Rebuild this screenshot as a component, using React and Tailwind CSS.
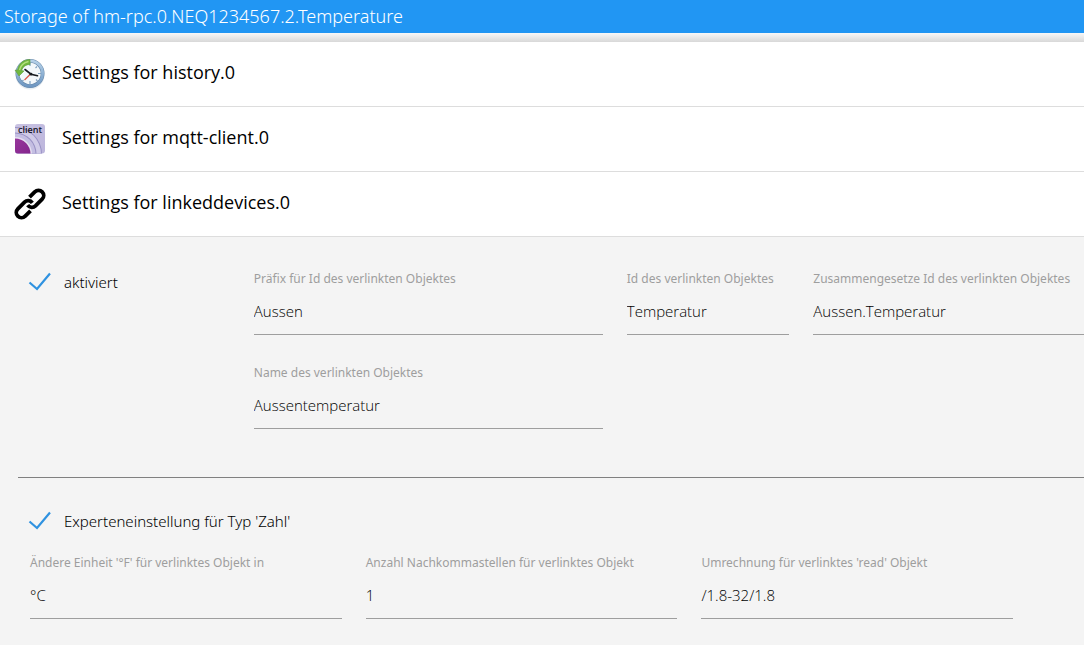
import { useState } from 'react';

// --- ICONS ---
function HistoryIcon() {
  return (
    <svg viewBox="0 0 32 32" className="w-8 h-8 shrink-0" aria-hidden="true">
      <defs>
        <linearGradient id="ring" x1="0" y1="0" x2="0" y2="1">
          <stop offset="0" stopColor="#b4d0e8" />
          <stop offset="1" stopColor="#6e97c2" />
        </linearGradient>
      </defs>
      <circle cx="16" cy="17" r="14.5" fill="#d9e2ea" opacity="0.6" />
      <circle cx="16" cy="15.5" r="12.6" fill="#f3f8fb" stroke="#6485a8" strokeWidth="3.8" />
      <circle cx="16" cy="15.5" r="12.6" fill="none" stroke="url(#ring)" strokeWidth="2.8" />
      <path d="M16 5v3M16 23v3M24 15.5h3M23 8.500l-1.500 1.500M9.500 22l-1.500 1.500M23.500 23l-1.500-1.500" stroke="#7fa3c4" strokeWidth="1.200" />
      <path d="M16 1.500v5C12 6.500 9 8.500 7.500 12.500l2.500.500-5 5-4-6 2.500.300C4.500 5.500 9.500 1.500 16 1.500z" fill="#72b83e" stroke="#5c9a3c" strokeWidth="0.600" />
      <path d="M14.500 3.500C10 4.500 6.500 7.500 5.500 12" fill="none" stroke="#b4e07f" strokeWidth="1.400" />
      <path d="M16.500 16l-6 6" stroke="#dd5548" strokeWidth="1.200" />
      <path d="M11 11.500l6 4.700 6.500 1.500" fill="none" stroke="#171b20" strokeWidth="1.600" strokeLinecap="round" />
      <circle cx="17" cy="16.200" r="1.400" fill="#171b20" />
    </svg>
  );
}

function MqttIcon() {
  return (
    <svg viewBox="0 0 32 32" className="w-8 h-8 shrink-0" aria-hidden="true">
      <defs>
        <clipPath id="tile">
          <rect x="1" y="1" width="30" height="29.5" rx="3" />
        </clipPath>
        <linearGradient id="lilac" x1="0" y1="0" x2="1" y2="1">
          <stop offset="0" stopColor="#c9c3e2" />
          <stop offset="1" stopColor="#bcb5dc" />
        </linearGradient>
        <linearGradient id="core" x1="0" y1="0" x2="1" y2="1">
          <stop offset="0" stopColor="#a03fa2" />
          <stop offset="1" stopColor="#7b1c86" />
        </linearGradient>
      </defs>
      <g clipPath="url(#tile)">
        <rect width="32" height="32" fill="url(#lilac)" />
        <circle cx="1" cy="31" r="27" fill="#9890c4" />
        <circle cx="1" cy="31" r="26" fill="#d0cbe8" />
        <circle cx="1" cy="31" r="21.5" fill="#9890c4" />
        <circle cx="1" cy="31" r="20.5" fill="#c4bee2" />
        <circle cx="1" cy="31" r="17" fill="#e4dff0" />
        <circle cx="1" cy="31" r="15.5" fill="url(#core)" />
      </g>
      <text x="16" y="10" textAnchor="middle" fontSize="9" fontWeight="600" fontFamily="Open Sans, sans-serif" fill="#17141f">client</text>
    </svg>
  );
}

function LinkIcon() {
  return (
    <svg viewBox="0 0 32 32" className="w-8 h-8 shrink-0" fill="none" stroke="#000" strokeWidth="3.8" aria-hidden="true">
      <g transform="rotate(-45 16 16)">
        <path d="M20.500 10.800H28a5.200 5.200 0 0 1 0 10.400H18.500a5.200 5.200 0 0 1-5-6" />
        <path d="M11.500 21.200H4a5.200 5.200 0 0 1 0-10.400H13.500a5.200 5.200 0 0 1 5 6" />
      </g>
    </svg>
  );
}

// --- FORM PARTS ---
function Check({ id, label, checked, onChange }) {
  return (
    <label htmlFor={id} className="flex items-center h-5 cursor-pointer font-['Noto_Sans',sans-serif] text-[15px] font-light text-black">
      <input id={id} type="checkbox" checked={checked} onChange={onChange} className="peer sr-only" />
      <svg viewBox="0 0 24 20" className="w-6 h-5 mr-3 shrink-0 invisible peer-checked:visible" fill="none" stroke="#2f92e0" strokeWidth="2.2" aria-hidden="true">
        <path d="M1.500 10.500l7.500 6.500L22 1.500" />
      </svg>
      <span className="whitespace-nowrap">{label}</span>
    </label>
  );
}

function Field({ id, label, value, onChange, className }) {
  return (
    <div className={className}>
      <label htmlFor={id} className="block h-4 leading-4 font-['Noto_Sans',sans-serif] text-xs text-[#9e9e9e] whitespace-nowrap">{label}</label>
      <input id={id} type="text" value={value} onChange={(e) => onChange(id, e.target.value)}
        className="block w-full h-12 bg-transparent border-b border-[#9e9e9e] text-[15px] font-light text-black outline-none focus:border-[#2196f3]" />
    </div>
  );
}

function AdapterRow({ icon, title, onClick }) {
  return (
    <button type="button" onClick={onClick} className="flex items-center w-full h-[65px] pl-3.5 bg-white border-b border-[#dddddd] text-left">
      {icon}
      <span className="ml-4 pb-1 text-lg text-black whitespace-nowrap">{title}</span>
    </button>
  );
}

export default function App() {
  const [open, setOpen] = useState(true);
  const [enabled, setEnabled] = useState(true);
  const [expert, setExpert] = useState(true);
  const [values, setValues] = useState({
    prefix: "Aussen",
    stateId: "Temperatur",
    name: "Aussentemperatur",
    unit: "°C",
    decimals: "1",
    conversion: "/1.8-32/1.8",
  });

  const update = (id, value) => setValues((prev) => ({ ...prev, [id]: value }));

  return (
    <div className="min-h-screen overflow-hidden bg-[#f4f4f4] font-['Open_Sans','Noto_Sans',sans-serif]">
      {/* HEADER */}
      <header className="h-[33px] px-1 bg-[#2196f3]">
        <h1 className="font-['Noto_Sans',sans-serif] text-lg leading-8 font-light text-white whitespace-nowrap">Storage of hm-rpc.0.NEQ1234567.2.Temperature</h1>
      </header>
      <div className="h-[9px] bg-linear-to-b from-[#f8f8f8] to-[#d8d8d8]"></div>

      {/* ADAPTERS */}
      <AdapterRow icon={<HistoryIcon />} title="Settings for history.0" />
      <AdapterRow icon={<MqttIcon />} title="Settings for mqtt-client.0" />
      <AdapterRow icon={<LinkIcon />} title="Settings for linkeddevices.0" onClick={() => setOpen(!open)} />

      {/* LINKED DEVICES: the form runs past the right edge */}
      {open && (
        <form className="w-[calc(100%+35px)] ml-[18px] pt-[34px]" onSubmit={(e) => e.preventDefault()}>
          <div className="grid grid-cols-[6fr_10fr_5fr_9fr] gap-y-[30px]">
            <div className="pl-2.5 pt-px">
              <Check id="enabled" label="aktiviert" checked={enabled} onChange={() => setEnabled(!enabled)} />
            </div>
            <Field id="prefix" label="Präfix für Id des verlinkten Objektes" value={values.prefix} onChange={update} className="min-w-0 px-3" />
            <Field id="stateId" label="Id des verlinkten Objektes" value={values.stateId} onChange={update} className="min-w-0 px-3" />
            <Field id="fullId" label="Zusammengesetze Id des verlinkten Objektes" value={`${values.prefix}.${values.stateId}`} onChange={() => {}} className="min-w-0 px-3" />
            <Field id="name" label="Name des verlinkten Objektes" value={values.name} onChange={update} className="col-start-2 min-w-0 px-3" />
          </div>

          <hr className="mt-12 border-t border-[#808080]" />

          <div className="pl-2.5 pt-[33px]">
            <Check id="expert" label="Experteneinstellung für Typ 'Zahl'" checked={expert} onChange={() => setExpert(!expert)} />
          </div>
          {expert && (
            <div className="grid grid-cols-[3fr_3fr_3fr_1fr] pt-6 pb-6">
              <Field id="unit" label="Ändere Einheit '°F' für verlinktes Objekt in" value={values.unit} onChange={update} className="min-w-0 px-3" />
              <Field id="decimals" label="Anzahl Nachkommastellen für verlinktes Objekt" value={values.decimals} onChange={update} className="min-w-0 px-3" />
              <Field id="conversion" label="Umrechnung für verlinktes 'read' Objekt" value={values.conversion} onChange={update} className="min-w-0 px-3" />
            </div>
          )}
        </form>
      )}
    </div>
  );
}
